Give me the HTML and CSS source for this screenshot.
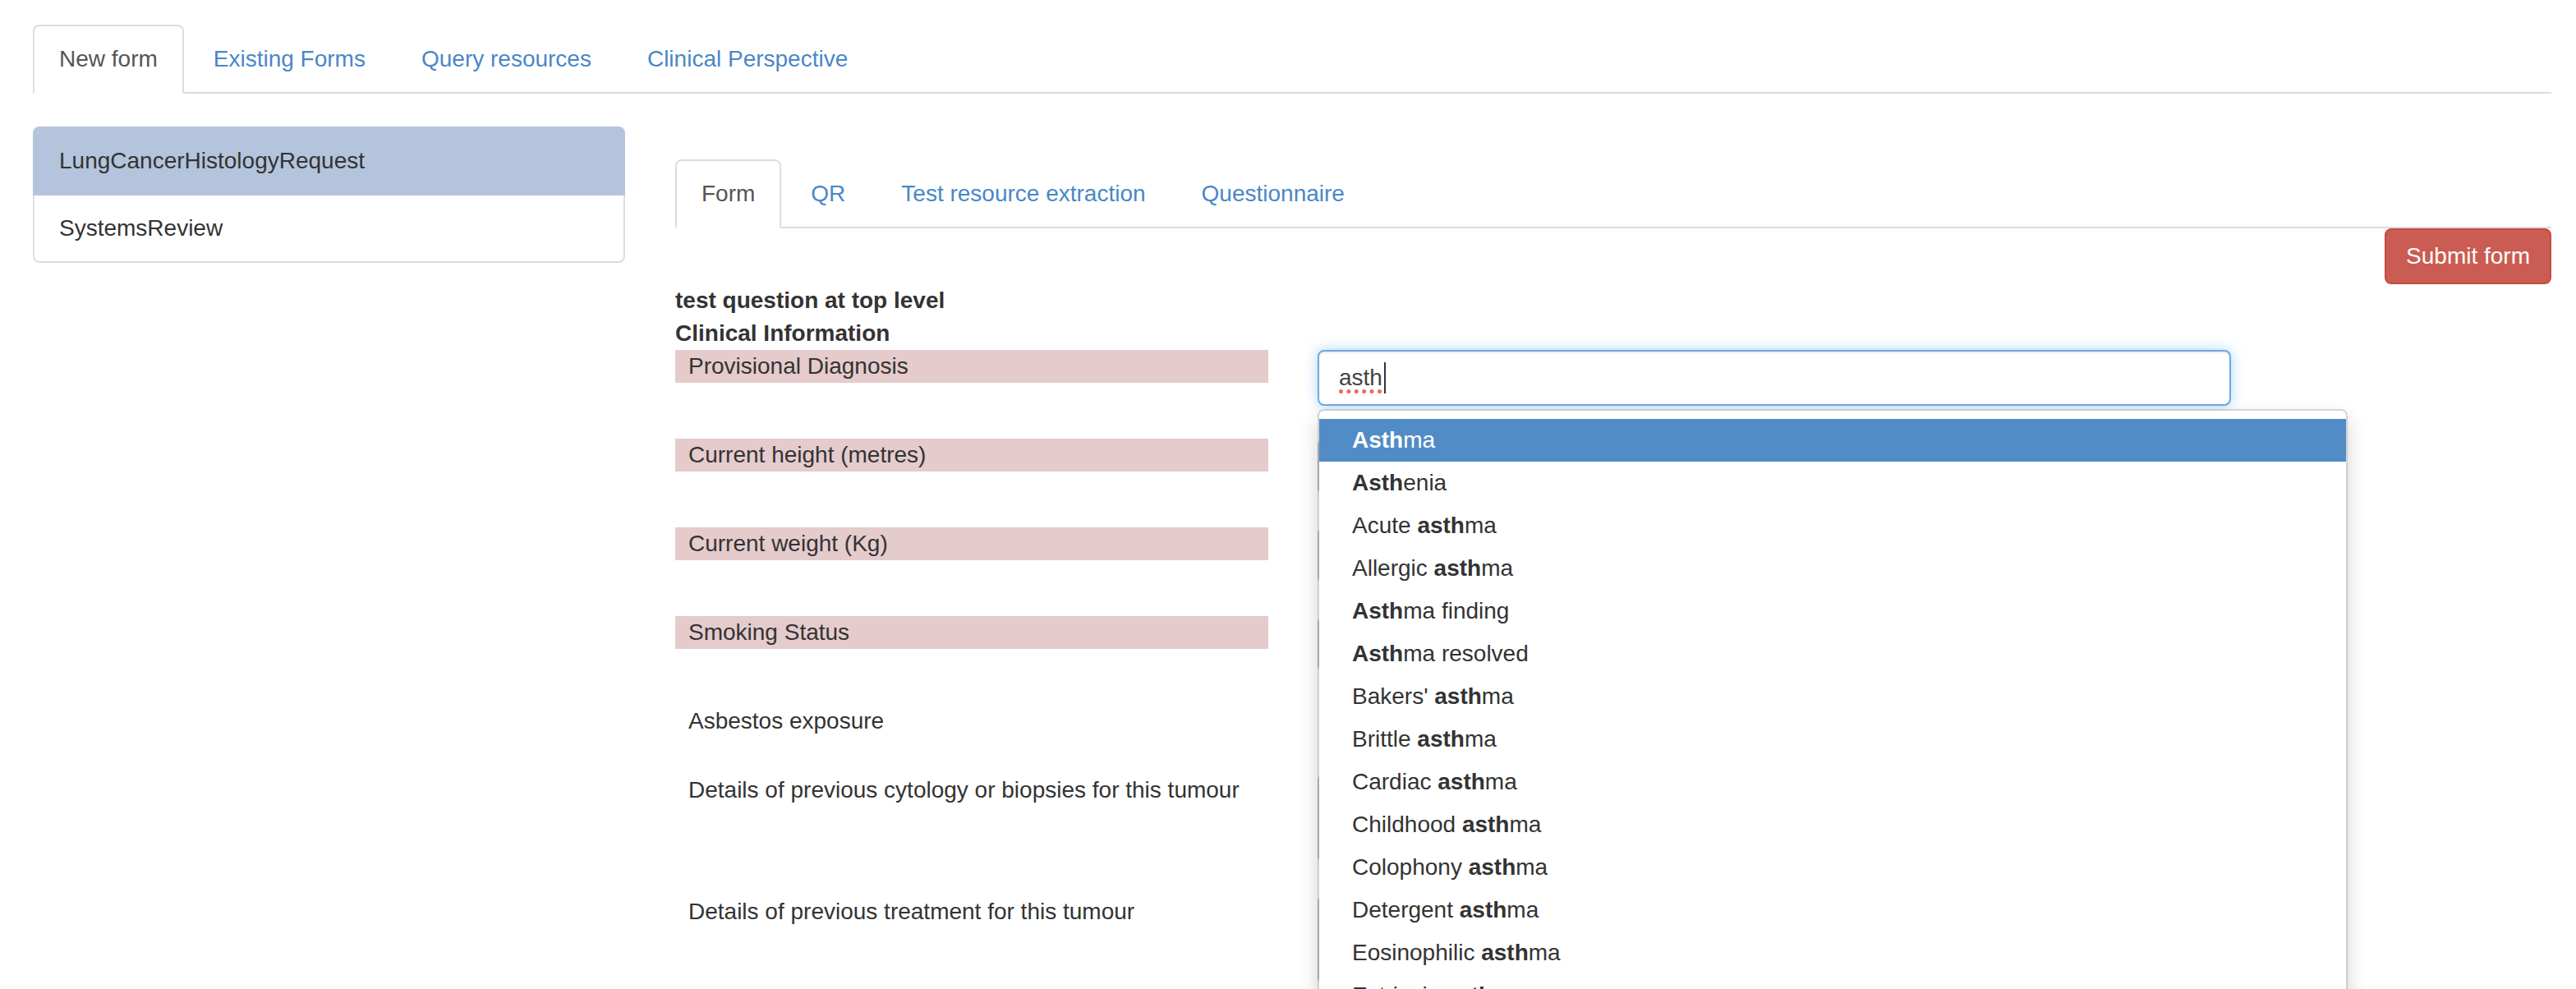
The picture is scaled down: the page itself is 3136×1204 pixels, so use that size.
FILE: index.html
```html
<!DOCTYPE html>
<html lang="en">
<head>
<meta charset="utf-8">
<title>New form</title>
<link rel="stylesheet" href="styles.css">
</head>
<body>
<div class="page">
  <ul class="nav-tabs">
    <li class="active"><a href="#">New form</a></li>
    <li><a href="#">Existing Forms</a></li>
    <li><a href="#">Query resources</a></li>
    <li><a href="#">Clinical Perspective</a></li>
  </ul>

  <div class="main">
    <aside class="sidebar">
      <div class="list-group">
        <a href="#" class="list-item active">LungCancerHistologyRequest</a>
        <a href="#" class="list-item">SystemsReview</a>
      </div>
    </aside>

    <section class="content">
      <ul class="nav-tabs">
        <li class="active"><a href="#">Form</a></li>
        <li><a href="#">QR</a></li>
        <li><a href="#">Test resource extraction</a></li>
        <li><a href="#">Questionnaire</a></li>
      </ul>

      <div class="actions">
        <button class="btn-danger" type="button">Submit form</button>
      </div>

      <form class="qform">
        <div class="group-title">test question at top level</div>
        <div class="group-title">Clinical Information</div>

        <div class="qrow">
          <label class="qlabel required">Provisional Diagnosis</label>
          <div class="field typeahead">
            <div class="form-control focused" role="textbox"><span class="misspelled">asth</span><span class="caret"></span></div>
            <ul class="dropdown-menu">
              <li class="active"><strong>Asth</strong>ma</li>
              <li><strong>Asth</strong>enia</li>
              <li>Acute <strong>asth</strong>ma</li>
              <li>Allergic <strong>asth</strong>ma</li>
              <li><strong>Asth</strong>ma finding</li>
              <li><strong>Asth</strong>ma resolved</li>
              <li>Bakers' <strong>asth</strong>ma</li>
              <li>Brittle <strong>asth</strong>ma</li>
              <li>Cardiac <strong>asth</strong>ma</li>
              <li>Childhood <strong>asth</strong>ma</li>
              <li>Colophony <strong>asth</strong>ma</li>
              <li>Detergent <strong>asth</strong>ma</li>
              <li>Eosinophilic <strong>asth</strong>ma</li>
              <li>Extrinsic <strong>asth</strong>ma</li>
              <li>Late onset <strong>asth</strong>ma</li>
            </ul>
          </div>
        </div>

        <div class="qrow">
          <label class="qlabel required">Current height (metres)</label>
          <div class="field"><input class="form-control" type="text"></div>
        </div>

        <div class="qrow">
          <label class="qlabel required">Current weight (Kg)</label>
          <div class="field"><input class="form-control" type="text"></div>
        </div>

        <div class="qrow">
          <label class="qlabel required">Smoking Status</label>
          <div class="field"><input class="form-control" type="text"></div>
        </div>

        <div class="qrow">
          <label class="qlabel">Asbestos exposure</label>
          <div class="field"><div class="checkbox-box"></div></div>
        </div>

        <div class="qrow">
          <label class="qlabel">Details of previous cytology or biopsies for this tumour</label>
          <div class="field"><textarea class="form-control textarea" rows="2"></textarea></div>
        </div>

        <div class="qrow">
          <label class="qlabel">Details of previous treatment for this tumour</label>
          <div class="field"><textarea class="form-control textarea" rows="2"></textarea></div>
        </div>
      </form>
    </section>
  </div>
</div>
</body>
</html>
```

FILE: styles.css
```css
html {
  overflow: hidden;
}

body {
  margin: 0;
  font-family: "Liberation Sans", Arial, Helvetica, sans-serif;
  font-size: 28px;
  line-height: 40px;
  color: #333;
  background: #fff;
}

a {
  text-decoration: none;
}

.page {
  padding: 30px 30px 0 40px;
}

/* Tabs */
.nav-tabs {
  display: flex;
  list-style: none;
  margin: 0;
  padding: 0;
  border-bottom: 2px solid #ddd;
}

.nav-tabs li {
  margin-bottom: -2px;
}

.nav-tabs a {
  display: block;
  padding: 20px 30px;
  margin-right: 4px;
  line-height: 40px;
  border: 2px solid transparent;
  border-radius: 8px 8px 0 0;
  color: #4a87c7;
}

.nav-tabs li.active a {
  color: #555;
  background: #fff;
  border-color: #ddd #ddd transparent;
}

/* Layout */
.main {
  display: flex;
  margin-top: 40px;
}

.sidebar {
  width: 721px;
  flex: none;
}

.content {
  flex: 1;
  margin-left: 61px;
  padding-top: 40px;
}

/* List group */
.list-group {
  display: flex;
  flex-direction: column;
}

.list-item {
  display: block;
  padding: 20px 30px;
  line-height: 40px;
  color: #333;
  background: #fff;
  border: 2px solid #ddd;
  margin-bottom: -2px;
}

.list-item:first-child {
  border-radius: 8px 8px 0 0;
}

.list-item:last-child {
  border-radius: 0 0 8px 8px;
  margin-bottom: 0;
}

.list-item.active {
  background: #b4c4dc;
  border-color: #b4c4dc;
  color: #333;
  position: relative;
}

/* Button */
.actions {
  display: flex;
  justify-content: flex-end;
}

.btn-danger {
  font-family: inherit;
  font-size: 28px;
  line-height: 40px;
  padding: 12px 24px;
  color: #fff;
  background: #ca5c53;
  border: 2px solid #c44b42;
  border-radius: 8px;
}

/* Form */
.group-title {
  font-weight: bold;
}

.qrow {
  display: grid;
  grid-template-columns: 722px 1112px;
  column-gap: 60px;
  align-items: start;
  margin-bottom: 40px;
}

.qlabel {
  display: block;
  padding: 0 16px;
  line-height: 40px;
}

.qlabel.required {
  background: #e5cbcc;
}

.field {
  position: relative;
}

.form-control {
  display: block;
  box-sizing: border-box;
  width: 100%;
  height: 68px;
  padding: 12px 24px;
  font-family: inherit;
  font-size: 28px;
  line-height: 40px;
  color: #555;
  background: #fff;
  border: 2px solid #ccc;
  border-radius: 8px;
  box-shadow: inset 0 2px 2px rgba(0, 0, 0, 0.075);
  margin: 0;
}

.form-control.focused {
  border-color: #6fa9e0;
  box-shadow: inset 0 2px 2px rgba(0, 0, 0, 0.075), 0 0 16px rgba(102, 175, 233, 0.55);
  display: flex;
  align-items: center;
  color: #444;
}

.textarea {
  height: 108px;
  resize: none;
}

.checkbox-box {
  height: 44px;
}

.misspelled {
  text-decoration-line: underline;
  text-decoration-style: dotted;
  text-decoration-color: #ec6b5e;
  text-decoration-thickness: 5px;
  text-underline-offset: 5px;
}

.caret {
  display: inline-block;
  width: 2px;
  height: 38px;
  margin-left: 2px;
  background: #333;
}

/* Typeahead dropdown */
.dropdown-menu {
  position: absolute;
  top: 100%;
  left: 0;
  z-index: 10;
  width: 1254px;
  box-sizing: border-box;
  margin: 4px 0 0;
  padding: 10px 0;
  list-style: none;
  background: #fff;
  background-clip: padding-box;
  border: 2px solid rgba(0, 0, 0, 0.15);
  border-radius: 8px;
  box-shadow: 0 12px 24px rgba(0, 0, 0, 0.175);
}

.dropdown-menu li {
  padding: 6px 40px;
  line-height: 40px;
  color: #333;
  white-space: nowrap;
}

.dropdown-menu li.active {
  background: #528cc6;
  color: #fff;
}
```
